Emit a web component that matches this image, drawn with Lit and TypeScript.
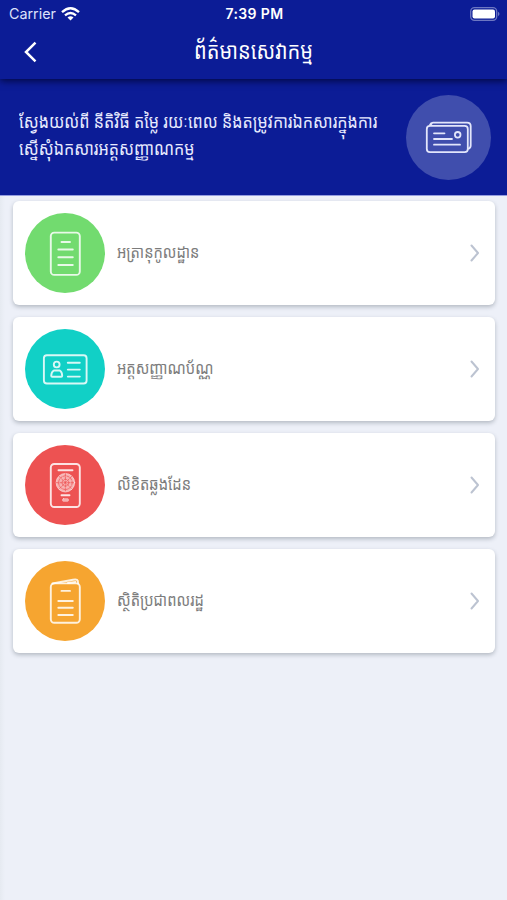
import { LitElement, html, css, svg } from "lit";
import { customElement, property } from "lit/decorators.js";

const icons: Record<string, unknown> = {
  document: svg`<rect x="25.800" y="19.600" width="29" height="42.300" rx="3.500"/>
    <path d="M36.500 29h8.500M33.300 36.500h14.500M33.300 44.300h14.500M33.300 52h14.500"/>`,
  idcard: svg`<rect x="18.900" y="26.300" width="42.700" height="28.200" rx="3"/>
    <circle cx="31.700" cy="35.500" r="2.900"/>
    <path d="M28.800 41.500h6q2.300 1.400 2.400 5.200 0 1-1 1h-9q-1 0-1-1 .2-3.800 2.600-5.200zM42.800 33.700h12M42.800 40.600h12M42.800 47.600h12"/>`,
  passport: svg`<rect x="25.800" y="19" width="29" height="43" rx="3.500"/>
    <path d="M33.500 25.300h14M36.500 50.200h8"/>
    <circle cx="40.400" cy="37.700" r="9.300" fill="#fff" fill-opacity=".55" stroke-width=".6"/>
    <g stroke-width=".9" stroke="#ed5252" stroke-opacity=".8" stroke-dasharray="2.400 1.300">
      <circle cx="40.400" cy="37.700" r="6.800"/><circle cx="40.400" cy="37.700" r="3.400"/>
      <path d="M31.400 37.700h18M40.400 28.700v18M33.900 31.200l13 13M46.900 31.200l-13 13"/>
    </g>
    <rect x="37.600" y="53.700" width="5.800" height="2.600" rx=".8" fill="#fff" fill-opacity=".5" stroke-width=".5"/>`,
  booklet: svg`<rect x="25.800" y="22.400" width="29" height="39.400" rx="3.500"/>
    <path d="M27.500 22.500l20.500-3.700q4.300-.8 4.800 1l.3 2.600M43 22l7.500-1"/>
    <path d="M36.500 29.900h8.500M33.300 40h14.500M33.300 46.800h14.500M33.300 54h14.500"/>`,
};

interface Service {
  label: string;
  icon: string;
  color: string;
}

const services: Service[] = [
  { label: "អត្រានុកូលដ្ឋាន", icon: "document", color: "#72db6f" },
  { label: "អត្តសញ្ញាណប័ណ្ណ", icon: "idcard", color: "#11d0c6" },
  { label: "លិខិតឆ្លងដែន", icon: "passport", color: "#ed5252" },
  { label: "ស្ថិតិប្រជាពលរដ្ឋ", icon: "booklet", color: "#f6a530" },
];

@customElement("service-card")
class ServiceCard extends LitElement {
  @property({ attribute: false }) service!: Service;

  static styles = css`
    .card {
      display: flex;
      align-items: center;
      box-sizing: border-box;
      height: 104px;
      padding: 0 12px;
      border-radius: 6px;
      background: #fff;
      box-shadow: 0 2px 4px rgba(60, 70, 85, 0.32);
    }
    .disc {
      width: 80px;
      height: 80px;
      border-radius: 50%;
      flex: none;
    }
    .disc svg {
      display: block;
      fill: none;
      stroke: rgba(255, 255, 255, 0.84);
      stroke-width: 1.9;
      stroke-linecap: round;
      stroke-linejoin: round;
    }
    .label {
      flex: 1;
      margin-left: 12px;
      padding-bottom: 3px;
      font-size: 16px;
      line-height: 28px;
      white-space: nowrap;
      color: #7c7c7c;
      transform: scale(0.92, 1.08);
      transform-origin: left;
    }
    .arrow {
      flex: none;
      margin-right: 3px;
      fill: none;
      stroke: #bcc3d1;
      stroke-width: 2;
      stroke-linecap: round;
      stroke-linejoin: round;
    }
  `;

  render() {
    const s = this.service;
    return html`<div class="card">
      <div class="disc" style="background:${s.color}">
        <svg width="80" height="80" viewBox="0 0 80 80">${icons[s.icon]}</svg>
      </div>
      <div class="label">${s.label}</div>
      <svg class="arrow" width="10" height="18" viewBox="0 0 10 18"><path d="M1.500 1.500l6.500 7.500-6.500 7.500"/></svg>
    </div>`;
  }
}

@customElement("app-root")
class AppRoot extends LitElement {
  static styles = css`
    :host {
      display: block;
      height: 900px;
      overflow: hidden;
      background: linear-gradient(90deg, #e6eaf1, #edf0f8 5px);
      font-family: "Noto Sans Khmer", "Khmer OS", Inter, "Noto Sans", sans-serif;
    }
    svg { display: block; }
    .top {
      position: relative;
      height: 79px;
      background: #0c1c96;
      box-shadow: 0 2px 7px rgba(0, 5, 50, 0.85);
      color: #fff;
    }
    .status {
      display: grid;
      grid-template-columns: 1fr auto 1fr;
      align-items: center;
      height: 27px;
      padding: 0 7px 0 9px;
      font-family: Inter, sans-serif;
      font-size: 14.300px;
    }
    .carrier { display: flex; align-items: center; gap: 5px; color: #dde1fb; }
    .time { font-size: 14px; font-weight: 600; letter-spacing: 0.35px; }
    .battery { justify-self: end; }
    .nav {
      display: grid;
      grid-template-columns: 60px 1fr 60px;
      height: 50px;
      align-items: center;
    }
    .back { margin-left: 23px; }
    .title {
      padding-bottom: 4px;
      text-align: center;
      font-size: 21px;
      line-height: 40px;
      white-space: nowrap;
      transform: scale(0.955, 1.1);
    }
    .banner {
      display: flex;
      align-items: center;
      box-sizing: border-box;
      height: 117px;
      padding: 0 16px 0 19px;
      background: #0c1c96;
      border-bottom: 1px solid #959de0;
      color: #e8ebff;
    }
    .intro {
      flex: 1;
      min-width: 0;
      padding-bottom: 4px;
      font-size: 17px;
      line-height: 25px;
      white-space: nowrap;
      transform: scale(0.95, 1.08);
      transform-origin: left;
    }
    .badge { flex: none; width: 85px; height: 85px; margin-top: 1px; border-radius: 50%; background: #404ead; }
    .list { display: flex; flex-direction: column; gap: 12px; padding: 5px 12px 0 13px; }
  `;

  render() {
    return html`
      <div class="top">
        <div class="status">
          <div class="carrier">
            <span>Carrier</span>
            <svg width="19" height="14" viewBox="0 0 19 14" fill="none" stroke="#fff" stroke-width="2.300">
              <path d="M1 5.200Q9.500-2.700 18 5.200M4 8.400q5.500-4.800 11 0"/>
              <path d="M9.500 13.500L6.500 10.500q3-2.400 6 0z" fill="#fff" stroke="none"/>
            </svg>
          </div>
          <div class="time">7:39 PM</div>
          <svg class="battery" width="30" height="14" viewBox="0 0 30 14">
            <rect x=".7" y=".7" width="26" height="12.600" rx="3.800" fill="none" stroke="#6d77c2" stroke-width="1.300"/>
            <rect x="2.500" y="2.500" width="22.500" height="9" rx="2" fill="#fff"/>
            <path d="M28 4.800q3 2.200 0 4.400z" fill="#6d77c2"/>
          </svg>
        </div>
        <div class="nav">
          <svg class="back" width="15" height="22" viewBox="0 0 15 22" fill="none" stroke="#fff" stroke-width="2.500">
            <path d="M12.500 1.700L3 11l9.500 9.300"/>
          </svg>
          <div class="title">ព័ត៌មានសេវាកម្ម</div>
        </div>
      </div>
      <div class="banner">
        <div class="intro">
          <div>ស្វែងយល់ពី នីតិវិធី តម្លៃ រយៈពេល និងតម្រូវការឯកសារក្នុងការ</div>
          <div>ស្នើសុំឯកសារអត្តសញ្ញាណកម្ម</div>
        </div>
        <div class="badge">
          <svg width="85" height="85" viewBox="0 0 85 85" fill="none" stroke="#e3e6fb" stroke-width="1.800" stroke-linecap="round" stroke-linejoin="round">
            <rect x="20.800" y="30.800" width="41" height="26.300" rx="3.200"/>
            <path d="M24 29.800q.8-2.200 3-2.200h34q3.700 0 3.700 3.500v19.500q0 2.800-2.700 3.200M24.500 30l1.300-1.500"/>
            <path d="M28 38.300h10.500M28 44h18M28 49.700h26"/>
            <circle cx="51.700" cy="39.800" r="2.800"/>
          </svg>
        </div>
      </div>
      <div class="list">${services.map((s) => html`<service-card .service=${s}></service-card>`)}</div>
    `;
  }
}
